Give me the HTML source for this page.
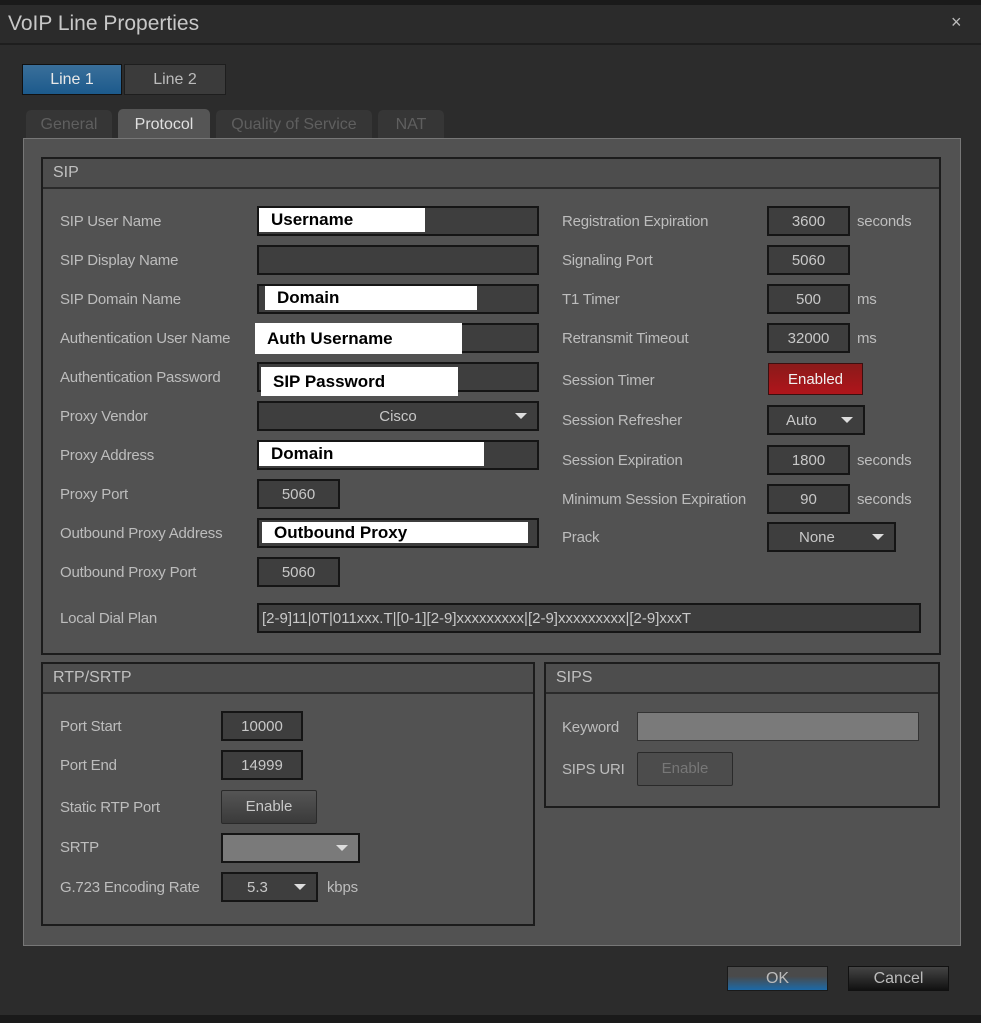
<!DOCTYPE html>
<html><head><style>
*{margin:0;padding:0;box-sizing:border-box}
body{width:981px;height:1023px;background:#2c2c2c;font-family:"Liberation Sans",sans-serif;position:relative;overflow:hidden;color:#c8c8c8}
.a{position:absolute}
.l{position:absolute;font-size:15px;color:#bdbdbd;letter-spacing:-0.2px;margin-top:1px}
.in{position:absolute;background:#3e3e3e;border:2px solid #151515;height:30px;color:#c8c8c8;font-size:15px;text-align:center;line-height:27px}
.w{position:absolute;background:#fff;color:#000;font-weight:bold;font-size:17px;line-height:24px;padding-left:12px}
.g{position:absolute;border:2px solid #1c1c1c;background:#525252}
.gh{position:absolute;left:0;right:0;top:0;height:30px;border-bottom:2px solid #2a2a2a;background:#4d4d4d;font-size:16px;color:#c0c0c0;padding:5px 10px}
.dd:after{content:"";position:absolute;right:10px;top:10px;border-left:6px solid transparent;border-right:6px solid transparent;border-top:6px solid #ddd}
.btn{position:absolute;background:linear-gradient(#555,#3a3a3a);border:1px solid #2a2a2a;color:#c8c8c8;font-size:15px;text-align:center;line-height:32px;border-radius:2px}
</style></head><body>
<div class="a" style="left:0;top:0;width:981px;height:5px;background:#1a1a1a"></div>
<div class="a" style="left:0;top:5px;width:981px;height:40px;background:#2b2b2b;border-bottom:2px solid #1e1e1e"></div>
<div class="a" style="left:8px;top:12px;font-size:21px;color:#c8c8c8">VoIP Line Properties</div>
<div class="a" style="left:951px;top:12px;font-size:18px;color:#bbb">×</div>

<div class="a" style="left:22px;top:64px;width:100px;height:31px;background:linear-gradient(#3a6f9a,#1c5a8c);border:1px solid #111;color:#e8e8e8;font-size:16px;text-align:center;line-height:30px">Line 1</div>
<div class="a" style="left:124px;top:64px;width:102px;height:31px;background:#3b3b3b;border:1px solid #1e1e1e;color:#bbb;font-size:16px;text-align:center;line-height:30px">Line 2</div>

<div class="a" style="left:26px;top:110px;width:86px;height:29px;background:#363636;border-radius:5px 5px 0 0;color:#5f5f5f;font-size:16px;text-align:center;line-height:29px">General</div>
<div class="a" style="left:118px;top:109px;width:92px;height:31px;background:#555;border-radius:5px 5px 0 0;color:#e0e0e0;font-size:16px;text-align:center;line-height:31px">Protocol</div>
<div class="a" style="left:216px;top:110px;width:156px;height:29px;background:#363636;border-radius:5px 5px 0 0;color:#5f5f5f;font-size:16px;text-align:center;line-height:29px">Quality of Service</div>
<div class="a" style="left:378px;top:110px;width:66px;height:29px;background:#363636;border-radius:5px 5px 0 0;color:#5f5f5f;font-size:16px;text-align:center;line-height:29px">NAT</div>

<div class="a" style="left:23px;top:138px;width:938px;height:808px;background:#525252;border:1px solid #777"></div>

<div class="g" style="left:41px;top:157px;width:900px;height:498px"><div class="gh">SIP</div></div>
<div class="l" style="left:60px;top:212px">SIP User Name</div>
<div class="l" style="left:60px;top:251px">SIP Display Name</div>
<div class="l" style="left:60px;top:290px">SIP Domain Name</div>
<div class="l" style="left:60px;top:329px">Authentication User Name</div>
<div class="l" style="left:60px;top:368px">Authentication Password</div>
<div class="l" style="left:60px;top:407px">Proxy Vendor</div>
<div class="l" style="left:60px;top:446px">Proxy Address</div>
<div class="l" style="left:60px;top:485px">Proxy Port</div>
<div class="l" style="left:60px;top:524px">Outbound Proxy Address</div>
<div class="l" style="left:60px;top:563px">Outbound Proxy Port</div>
<div class="l" style="left:60px;top:609px">Local Dial Plan</div>

<div class="in" style="left:257px;top:206px;width:282px"></div>
<div class="w" style="left:259px;top:208px;width:166px">Username</div>
<div class="in" style="left:257px;top:245px;width:282px"></div>
<div class="in" style="left:257px;top:284px;width:282px"></div>
<div class="w" style="left:265px;top:286px;width:212px">Domain</div>
<div class="in" style="left:257px;top:323px;width:282px"></div>
<div class="w" style="left:255px;top:323px;width:207px;height:31px;line-height:31px">Auth Username</div>
<div class="in" style="left:257px;top:362px;width:282px"></div>
<div class="w" style="left:261px;top:367px;width:197px;height:29px;line-height:30px">SIP Password</div>
<div class="in dd" style="left:257px;top:401px;width:282px">Cisco</div>
<div class="in" style="left:257px;top:440px;width:282px"></div>
<div class="w" style="left:259px;top:442px;width:225px">Domain</div>
<div class="in" style="left:257px;top:479px;width:83px">5060</div>
<div class="in" style="left:257px;top:518px;width:282px"></div>
<div class="w" style="left:262px;top:522px;width:266px;height:21px;line-height:22px">Outbound Proxy</div>
<div class="in" style="left:257px;top:557px;width:83px">5060</div>
<div class="in" style="left:257px;top:603px;width:664px;text-align:left;padding-left:3px">[2-9]11|0T|011xxx.T|[0-1][2-9]xxxxxxxxx|[2-9]xxxxxxxxx|[2-9]xxxT</div>

<div class="l" style="left:562px;top:212px">Registration Expiration</div>
<div class="l" style="left:562px;top:251px">Signaling Port</div>
<div class="l" style="left:562px;top:290px">T1 Timer</div>
<div class="l" style="left:562px;top:329px">Retransmit Timeout</div>
<div class="l" style="left:562px;top:371px">Session Timer</div>
<div class="l" style="left:562px;top:411px">Session Refresher</div>
<div class="l" style="left:562px;top:451px">Session Expiration</div>
<div class="l" style="left:562px;top:490px">Minimum Session Expiration</div>
<div class="l" style="left:562px;top:528px">Prack</div>
<div class="in" style="left:767px;top:206px;width:83px">3600</div>
<div class="in" style="left:767px;top:245px;width:83px">5060</div>
<div class="in" style="left:767px;top:284px;width:83px">500</div>
<div class="in" style="left:767px;top:323px;width:83px">32000</div>
<div class="a" style="left:768px;top:363px;width:95px;height:32px;background:linear-gradient(#8a1a1a,#b0151b);border:1px solid #3a1010;color:#f0f0f0;font-size:15px;text-align:center;line-height:31px">Enabled</div>
<div class="in dd" style="left:767px;top:405px;width:98px;text-align:left;padding-left:17px">Auto</div>
<div class="in" style="left:767px;top:445px;width:83px">1800</div>
<div class="in" style="left:767px;top:484px;width:83px">90</div>
<div class="in dd" style="left:767px;top:522px;width:129px;text-align:left;padding-left:30px">None</div>
<div class="l" style="left:857px;top:212px">seconds</div>
<div class="l" style="left:857px;top:290px">ms</div>
<div class="l" style="left:857px;top:329px">ms</div>
<div class="l" style="left:857px;top:451px">seconds</div>
<div class="l" style="left:857px;top:490px">seconds</div>

<div class="g" style="left:41px;top:662px;width:494px;height:264px"><div class="gh">RTP/SRTP</div></div>
<div class="l" style="left:60px;top:717px">Port Start</div>
<div class="l" style="left:60px;top:756px">Port End</div>
<div class="l" style="left:60px;top:798px">Static RTP Port</div>
<div class="l" style="left:60px;top:838px">SRTP</div>
<div class="l" style="left:60px;top:878px">G.723 Encoding Rate</div>
<div class="in" style="left:221px;top:711px;width:82px">10000</div>
<div class="in" style="left:221px;top:750px;width:82px">14999</div>
<div class="btn" style="left:221px;top:790px;width:96px">Enable</div>
<div class="in dd" style="left:221px;top:833px;width:139px;background:#7a7a7a"></div>
<div class="in dd" style="left:221px;top:872px;width:97px;text-align:left;padding-left:24px">5.3</div>
<div class="l" style="left:327px;top:878px">kbps</div>

<div class="g" style="left:544px;top:662px;width:396px;height:146px"><div class="gh">SIPS</div></div>
<div class="l" style="left:562px;top:718px">Keyword</div>
<div class="l" style="left:562px;top:760px">SIPS URI</div>
<div class="a" style="left:637px;top:712px;width:282px;height:29px;background:#7a7a7a;border:1px solid #333"></div>
<div class="btn" style="left:637px;top:752px;width:96px;color:#777;background:#4c4c4c">Enable</div>

<div class="a" style="left:727px;top:966px;width:101px;height:25px;background:linear-gradient(#4a4a4a 40%,#1c6aa8);border:1px solid #1a1a1a;color:#bbb;font-size:16px;text-align:center;line-height:24px">OK</div>
<div class="a" style="left:848px;top:966px;width:101px;height:25px;background:linear-gradient(#444,#111);border:1px solid #111;color:#bbb;font-size:16px;text-align:center;line-height:24px">Cancel</div>
<div class="a" style="left:0;top:1015px;width:981px;height:8px;background:#1a1a1a"></div>
</body></html>
